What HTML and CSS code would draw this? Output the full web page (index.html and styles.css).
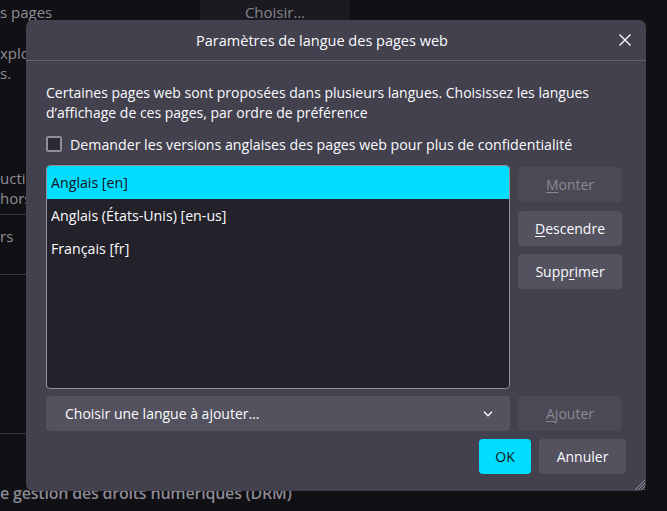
FILE: index.html
```html
<!DOCTYPE html>
<html lang="fr">
<head>
<meta charset="utf-8">
<title>Paramètres de langue des pages web</title>
<link rel="stylesheet" href="styles.css">
</head>
<body>
<div class="page">
  <div class="toprow">
    <div class="side-line first">s pages</div>
    <div class="choose-box">Ch<u>o</u>isir…</div>
  </div>
  <div class="side-line l2">xplorer</div>
  <div class="side-line">s.</div>
  <div class="side-line l4">uction</div>
  <div class="side-line">hors</div>
  <div class="rule r1"></div>
  <div class="side-line l6">rs</div>
  <div class="rule r2"></div>
  <div class="rule r3"></div>
  <div class="page-heading">e gestion des droits numériques (DRM)</div>
</div>

<div class="dialog">
  <div class="dialog-header">
    <span class="dialog-title">Paramètres de langue des pages web</span>
    <svg class="close" width="12" height="12" viewBox="0 0 12 12"><path d="M0.5 0.5 L11.5 11.5 M11.5 0.5 L0.5 11.5" stroke="#fbfbfe" stroke-width="1.4" fill="none"/></svg>
  </div>
  <div class="dialog-body">
    <p class="desc">Certaines pages web sont proposées dans plusieurs langues. Choisissez les langues d’affichage de ces pages, par ordre de préférence</p>
    <label class="check-row"><span class="checkbox"></span>Demander les versions anglaises des pages web pour plus de confidentialité</label>
    <div class="grid">
      <div class="listbox">
        <div class="item selected">Anglais [en]</div>
        <div class="item">Anglais (États-Unis) [en-us]</div>
        <div class="item">Français [fr]</div>
      </div>
      <div class="side-buttons">
        <button class="btn disabled"><u>M</u>onter</button>
        <button class="btn"><u>D</u>escendre</button>
        <button class="btn">Supp<u>r</u>imer</button>
      </div>
      <div class="select">
        <span>Choisir une langue à ajouter…</span>
        <svg width="10" height="6" viewBox="0 0 10 6"><path d="M1 0.8 L5 4.8 L9 0.8" stroke="#fbfbfe" stroke-width="1.3" fill="none"/></svg>
      </div>
      <button class="btn disabled"><u>A</u>jouter</button>
    </div>
    <div class="footer">
      <button class="btn primary">OK</button>
      <button class="btn cancel">Annuler</button>
    </div>
  </div>
  <svg class="grip" width="14" height="14" viewBox="0 0 14 14"><path d="M13 3 L3 13 M13 6 L6 13 M13 9 L9 13 M13 12 L12 13" stroke="#8f8f9d" stroke-width="1" fill="none"/></svg>
</div>
</body>
</html>
```

FILE: styles.css
```css
* { box-sizing: border-box; }
html, body { margin: 0; padding: 0; }
body {
  width: 667px;
  height: 511px;
  overflow: hidden;
  background: #111015;
  font-family: "Open Sans", "Noto Sans", sans-serif;
  position: relative;
}
u { text-decoration: underline; text-underline-offset: 2px; }

/* background page */
.page { color: #8e8d95; font-size: 15px; }
.toprow { display: flex; align-items: flex-start; }
.side-line { width: 200px; line-height: 20px; white-space: nowrap; overflow: hidden; }
.side-line.first { margin-top: 2px; }
.choose-box {
  width: 150px; height: 20px; background: #1b1a21; text-align: center;
  line-height: 24px; color: #86858d;
}
.side-line.l2 { margin-top: 21px; }
.side-line.l4 { margin-top: 85px; }
.rule { width: 200px; border-top: 1px solid #3a3940; }
.r1 { margin-top: 6px; }
.side-line.l6 { margin-top: 11px; }
.r2 { margin-top: 28px; }
.r3 { margin-top: 158px; }
.page-heading {
  margin-top: 47px; font-size: 16px; font-weight: 600; line-height: 24px;
  white-space: nowrap; color: #8b8a92; letter-spacing: -0.2px;
}

/* dialog */
.dialog {
  position: absolute; left: 26px; top: 20px; width: 620px; height: 471px;
  background: #42414d; border-radius: 7px; color: #fbfbfe; font-size: 14px;
}
.dialog-header {
  height: 41px; border-bottom: 1px solid #62616c; padding-right: 28px;
  display: flex; align-items: center; justify-content: center; position: relative;
}
.dialog-title { font-size: 14.5px; }
.close { position: absolute; right: 15px; top: 14px; }
.dialog-body { padding: 22px 20px 0 20px; }
.desc { margin: 0; line-height: 20px; }
.check-row { display: flex; align-items: center; gap: 8px; margin-top: 11px; height: 20px; font-size: 14.2px; }
.checkbox {
  width: 16px; height: 16px; border: 2px solid #8f8f9d; border-radius: 2px; background: #2b2a33;
}
.grid {
  margin-top: 11px;
  display: grid; grid-template-columns: 464px 104px; grid-template-rows: 224px 35px;
  column-gap: 8px; row-gap: 7px;
}
.listbox {
  background: #23222b; border: 1px solid #8f8f9d; border-radius: 4px; overflow: hidden;
}
.item { height: 33px; line-height: 33px; padding-left: 4px; font-size: 14.2px; }
.item.selected { background: #00ddff; color: #15141a; }
.side-buttons { display: flex; flex-direction: column; gap: 8.5px; padding-top: 2px; }
.btn {
  font-family: inherit; font-size: 14px; color: #fbfbfe; background: #53525e;
  border: none; border-radius: 4px; height: 35px; padding: 0; width: 104px;
}
.btn.disabled { background: #4a4955; color: #8a8994; }
.select {
  background: #53525e; border-radius: 4px; display: flex; align-items: center;
  justify-content: space-between; padding: 0 17px 0 19px;
}
.footer { display: flex; justify-content: flex-end; gap: 8px; margin-top: 8px; }
.btn.primary { width: 52px; background: #00ddff; color: #15141a; }
.btn.cancel { width: 87px; }
.grip { position: absolute; right: 0; bottom: 0; }
```
